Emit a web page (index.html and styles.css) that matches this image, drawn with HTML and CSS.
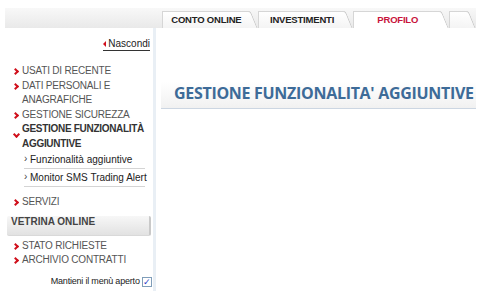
FILE: index.html
```html
<!DOCTYPE html>
<html lang="it">
<head>
  <meta charset="UTF-8">
  <title>Profilo - Gestione funzionalità aggiuntive</title>
  <link rel="stylesheet" href="styles.css">
</head>
<body>
  <div class="page">
    <!-- barra delle schede -->
    <div class="topbar">
      <div class="tab">CONTO ONLINE</div>
      <div class="tab">INVESTIMENTI</div>
      <div class="tab active">PROFILO</div>
      <div class="tab stub"></div>
    </div>
    <div class="layout">
      <div class="sidebar">
        <div class="hide-row"><a class="hide-link" href="#"><span class="tri"></span>Nascondi</a></div>
        <ul class="menu menu-top">
          <li><span class="chev"></span>USATI DI RECENTE</li>
          <li><span class="chev"></span>DATI PERSONALI E ANAGRAFICHE</li>
          <li><span class="chev"></span>GESTIONE SICUREZZA</li>
          <li class="open"><span class="chev down"></span>GESTIONE FUNZIONALITÀ AGGIUNTIVE</li>
        </ul>
        <ul class="submenu">
          <li><span class="sub-chev">&#x203A;</span>Funzionalità aggiuntive</li>
          <li><span class="sub-chev">&#x203A;</span>Monitor SMS Trading Alert</li>
        </ul>
        <ul class="menu menu-mid">
          <li><span class="chev"></span>SERVIZI</li>
        </ul>
        <div class="section">VETRINA ONLINE</div>
        <ul class="menu menu-bottom">
          <li><span class="chev"></span>STATO RICHIESTE</li>
          <li><span class="chev"></span>ARCHIVIO CONTRATTI</li>
        </ul>
        <div class="keep-row">Mantieni il menù aperto <span class="check">&#x2713;</span></div>
      </div>
      <div class="main">
        <h1 class="title">GESTIONE FUNZIONALITA' AGGIUNTIVE</h1>
      </div>
    </div>
  </div>
</body>
</html>
```

FILE: styles.css
```css
body { background: #fff; margin: 0; padding: 0; font-family: "Liberation Sans", Arial, sans-serif; color: #555; }
.page { margin: 8px 7px 0 5px; }

.topbar { height: 20px; background: linear-gradient(#f8f8f8, #e9e9e9); display: flex; align-items: flex-end; padding-left: 157px; overflow: hidden; }
.tab { position: relative; width: 93px; height: 17px; margin-right: 8px; background: linear-gradient(#ffffff, #f4f4f4); border-top: 1px solid #d6d6d6; border-left: 1px solid #d6d6d6; box-sizing: border-box; font: bold 9.5px "Liberation Sans", Arial, sans-serif; letter-spacing: -0.2px; color: #222; text-align: center; line-height: 16px; }
.tab::after { content: ""; position: absolute; top: -1px; right: -8px; width: 9px; height: 17px; background: linear-gradient(#ffffff, #f4f4f4); border-right: 1px solid #c8c8c8; border-top: 1px solid #d6d6d6; border-top-right-radius: 3px; transform: skewX(22deg); transform-origin: bottom left; }
.tab.active { color: #c8143c; background: #fff; }
.tab.active::after { background: #fff; }
.tab.stub { width: 20px; }

.layout { display: flex; }
.sidebar { width: 148px; border-right: 3px solid #e9eff5; padding-bottom: 6px; }
.hide-row { text-align: right; padding: 8px 3px 0 0; height: 14px; line-height: 12px; }
.hide-link { font: 10px "Liberation Sans", Arial, sans-serif; color: #222; text-decoration: none; border-bottom: 1px solid #333; padding-bottom: 1px; }
.tri { display: inline-block; width: 0; height: 0; border-top: 3px solid transparent; border-bottom: 3px solid transparent; border-right: 3px solid #d0101c; margin-right: 2px; vertical-align: 0; }

.menu { list-style: none; margin: 0; padding: 0 2px 0 12px; font: 10px "Liberation Sans", Arial, sans-serif; letter-spacing: -0.2px; color: #555; }
.menu li { position: relative; padding-left: 5px; line-height: 14.5px; }
.menu-top { margin-top: 14px; }
.menu-mid { margin-top: 8px; }
.menu-bottom { margin-top: 3px; }
.chev { position: absolute; left: -4px; top: 5px; width: 3px; height: 3px; border-top: 2px solid #d0101c; border-right: 2px solid #d0101c; transform: rotate(45deg); }
.chev.down { transform: rotate(135deg); top: 10px; left: -3px; }
.menu li.open { font-weight: bold; color: #333; letter-spacing: -0.3px; }

.submenu { list-style: none; margin: 0; padding: 0 8px 0 19px; font: 10px "Liberation Sans", Arial, sans-serif; color: #222; }
.submenu li { border-bottom: 1px solid #d4d4d4; line-height: 17px; padding-left: 6px; position: relative; white-space: nowrap; }
.sub-chev { position: absolute; left: 0; top: -1px; color: #444; }

.section { margin: 6px 2px 0 2px; height: 19px; line-height: 19px; padding-left: 4px; background: linear-gradient(#f7f7f7, #e2e2e2); border-right: 2px solid #c9c9c9; border-bottom: 1px solid #d9d9d9; border-radius: 2px; font: bold 10px "Liberation Sans", Arial, sans-serif; color: #444; }

.keep-row { text-align: right; padding: 8px 1px 0 0; font: 9px "Liberation Sans", Arial, sans-serif; letter-spacing: -0.2px; color: #222; }
.check { display: inline-block; width: 8px; height: 8px; border: 1px solid #7f9db9; color: #2a3cc8; font-size: 9px; line-height: 8px; text-align: center; vertical-align: -1px; letter-spacing: 0; }

.main { flex: 1; padding-left: 5px; }
.title { margin: 54px 0 0 0; height: 26px; line-height: 26px; padding-left: 13px; background: linear-gradient(#ffffff, #f1f1f1); border-bottom: 1px solid #ccd6e2; font: bold 16px "Open Sans", "Liberation Sans", sans-serif; letter-spacing: -0.3px; color: #3d6b98; white-space: nowrap; overflow: hidden; }
```
